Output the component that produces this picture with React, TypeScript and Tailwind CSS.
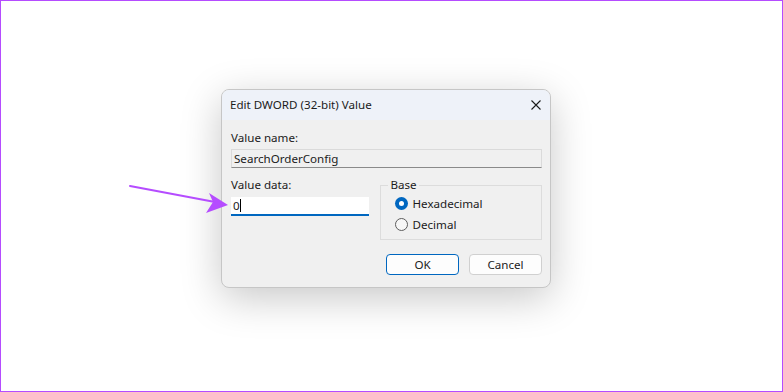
const font = { fontFamily: '"Noto Sans", "Open Sans", sans-serif' };

function Radio({ checked, label }: { checked?: boolean; label: string }) {
  return (
    <div className="flex items-center h-[21px]">
      {checked ? (
        <span className="w-[13px] h-[13px] rounded-full bg-[#0067c0] flex items-center justify-center">
          <span className="w-[5px] h-[5px] rounded-full bg-white" />
        </span>
      ) : (
        <span className="w-[13px] h-[13px] rounded-full border border-[#5d5d5d] bg-[#f7f7f7]" />
      )}
      <span className="ml-[4px] text-[11.6px] text-[#1b1b1b]">{label}</span>
    </div>
  );
}

export default function App() {
  return (
    <div
      className="relative w-[783px] h-[392px] bg-white border border-[#b54cff] pl-[220px] pt-[88px]"
      style={font}
    >
      {/* dialog */}
      <div className="w-[330px] rounded-[8px] border border-[#c6c6c6] bg-[#f0f0f0] overflow-hidden shadow-[0_10px_40px_rgba(0,0,0,0.22)]">
        <div className="h-[30px] bg-[#eef2f9] flex items-center justify-between pl-[8px] pr-[9px]">
          <span className="text-[11.6px] text-[#1b1b1b]">Edit DWORD (32-bit) Value</span>
          <svg width="10" height="10" viewBox="0 0 10 10">
            <path d="M0.5 0.5 L9.5 9.5 M9.5 0.5 L0.5 9.5" stroke="#1b1b1b" strokeWidth="1.1" />
          </svg>
        </div>

        <div className="pl-[9px] pr-[8px] pt-[11px] pb-[12px]">
          <div className="text-[11.6px] leading-[14px] text-[#1b1b1b]">Value name:</div>
          <div className="mt-[4px] h-[19px] border border-[#dadada] border-b-[#8a8a8a] bg-[#f0f0f0] flex items-center px-[2px] text-[11.6px] text-[#1b1b1b]">
            SearchOrderConfig
          </div>

          <div className="mt-[10px] flex">
            <div className="w-[139px]">
              <div className="text-[11.6px] leading-[14px] text-[#1b1b1b]">Value data:</div>
              <div className="mt-[5px] h-[19px] bg-white border-b-2 border-[#0067c0] flex items-center px-[2px] text-[11.6px] text-[#1b1b1b]">
                0<span className="w-px h-[13px] bg-black" />
              </div>
            </div>
            <fieldset className="ml-[11px] w-[162px] h-[62px] border border-[#dcdcdc] px-[14px]">
              <legend className="ml-[-7px] px-[2px] text-[11.6px] leading-[14px] text-[#1b1b1b]">Base</legend>
              <div className="mt-[1px]">
                <Radio checked label="Hexadecimal" />
                <Radio label="Decimal" />
              </div>
            </fieldset>
          </div>

          <div className="mt-[14px] flex justify-end gap-[10px]">
            <button className="w-[73px] h-[21px] rounded-[4px] border border-[#0067c0] bg-[#fdfdfd] text-[11.6px] text-[#1b1b1b]">
              OK
            </button>
            <button className="w-[73px] h-[21px] rounded-[4px] border border-[#d0d0d0] bg-[#fdfdfd] text-[11.6px] text-[#1b1b1b]">
              Cancel
            </button>
          </div>
        </div>
      </div>

      {/* annotation arrow */}
      <svg className="absolute left-[120px] top-[175px]" width="115" height="45" viewBox="120 175 115 45">
        <path d="M129 185 L214 201" stroke="#b54cff" strokeWidth="2" strokeLinecap="round" />
        <path d="M227 204 L208 192 L212 201 L205 212 Z" fill="#b54cff" />
      </svg>
    </div>
  );
}
